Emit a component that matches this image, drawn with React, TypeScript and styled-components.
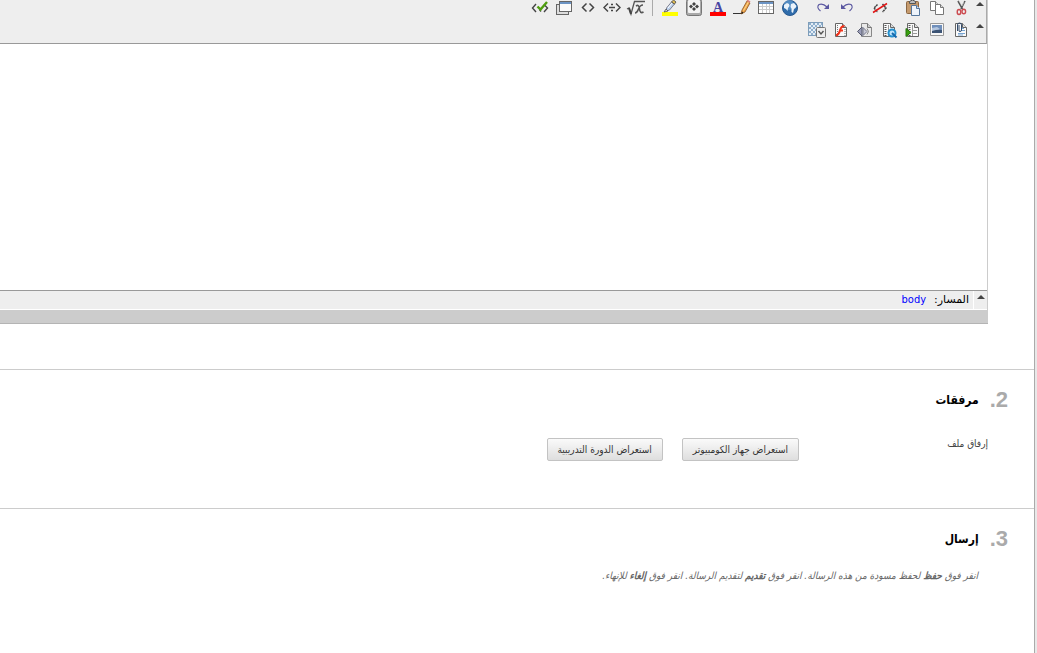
import React from "react";
import styled, { createGlobalStyle, css } from "styled-components";

const GlobalStyle = createGlobalStyle`
  *, *::before, *::after { box-sizing: border-box; }
  body {
    margin: 0;
    background: #e8e8e8;
    color: #000;
    font-family: "DejaVu Sans Condensed", "DejaVu Sans", sans-serif;
    font-size: 10px;
  }
`;

const Page = styled.main`
  min-height: 100vh;
  margin-right: 2px;
  background: #fff;
  border-right: 1px solid #aaa;
`;

const Editor = styled.section`
  margin-right: 46px;
  border-right: 1px solid #ccc;
`;

const Toolbar = styled.div`
  padding-bottom: 5px;
  background: #eee;
  border-right: 1px solid #aaa;
  border-bottom: 1px solid #999;
`;

const ToolRow = styled.div`
  display: flex;
  align-items: flex-start;
  height: 16px;
  & + & { margin-top: 6px; }
`;

const Collapse = styled.button<{ $low?: boolean }>`
  display: flex;
  justify-content: center;
  width: 13px;
  height: 16px;
  padding: ${(p) => (p.$low ? 4 : 2)}px 0 0;
  border: 0;
  background: none;
`;

const Tool = styled.button<{ $gap?: boolean }>`
  display: flex;
  justify-content: center;
  flex: none;
  width: 24px;
  height: 16px;
  padding: 0;
  border: 0;
  background: none;
  ${(p) => p.$gap && css`margin-right: 9px;`}
`;

const Separator = styled.span`
  width: 1px;
  height: 16px;
  margin: 0 5px 0 4px;
  background: #aaa;
`;

const Icon = styled.svg`
  display: block;
  flex: none;
  overflow: visible;
`;

const Content = styled.textarea`
  display: block;
  width: 100%;
  height: 246px;
  padding: 8px;
  border: 0;
  outline: 0;
  resize: none;
  background: #fff;
  font: inherit;
`;

const StatusBar = styled.div`
  display: flex;
  height: 20px;
  background: #eee;
  border-top: 1px solid #999;
  border-bottom: 1px solid #fff;
`;

const PathLine = styled.div`
  display: flex;
  flex: 1;
  gap: 8px;
  align-items: center;
  padding-right: 4px;
  border-right: 1px solid #fff;
  font-family: "DejaVu Sans", sans-serif;
  font-size: 11px;
  line-height: 18px;
`;

const PathLink = styled.a`
  color: #00f;
  font-family: "DejaVu Sans Condensed", "DejaVu Sans", sans-serif;
  text-decoration: none;
`;

const ResizeBar = styled.div`
  height: 14px;
  margin-right: -1px;
  background: #ccc;
  border-bottom: 1px solid #b4b4b4;
`;

const Step = styled.section`
  padding: 16px 26px 0 0;
  border-top: 1px solid #ccc;
`;

const Steps = styled.div`
  margin-top: 45px;
`;

const StepTitle = styled.h2`
  display: flex;
  gap: 11px;
  align-items: center;
  height: 28px;
  margin: 0;
  font-size: 12px;
  font-weight: bold;
`;

const StepNumber = styled.span`
  color: #aaa;
  font-family: "Liberation Sans", sans-serif;
  font-size: 22px;
`;

const Field = styled.div`
  display: flex;
  height: 94px;
  padding: 24px 20px 0 0;
`;

const FieldLabel = styled.label`
  width: 189px;
  color: #444;
  line-height: 12px;
`;

const Actions = styled.div`
  display: flex;
  gap: 19px;
`;

const BrowseButton = styled.button`
  height: 23px;
  padding: 0 10px;
  border: 1px solid #c3c3c3;
  border-radius: 2px;
  background: linear-gradient(#fafafa, #dedede);
  color: #333;
  font: inherit;
  white-space: nowrap;
`;

const Note = styled.p`
  margin: 15px 30px 0 0;
  color: #666;
  font-style: italic;
  line-height: 16px;
`;

const PageSheet = () => (
  <>
    <path d="M2.5 1.5h7l4 4v9h-11z" fill="#fafafa" stroke="#666" />
    <path d="M9.5 1.5v4h4" fill="#ddd" stroke="#666" />
  </>
);

const FilmSheet = () => (
  <>
    <PageSheet />
    <path d="M4.5 3v11" stroke="#555" strokeWidth="2" strokeDasharray="1 1" />
    <path d="M7.5 3v11" stroke="#999" />
    <path d="M8 8.5h4M8 11.5h4" stroke="#999" />
  </>
);

const drawings: Record<string, React.ReactNode> = {
  cut: (
    <g fill="none">
      <path d="M5 1l4.500 8M12 1L8 9" stroke="#555" strokeWidth="1.600" />
      <path d="M6 1l3 5M11 2L9 6" stroke="#ddd" strokeWidth=".6" />
      <ellipse cx="6" cy="12" rx="1.800" ry="2.500" stroke="#cc4b50" strokeWidth="1.400" />
      <ellipse cx="10.800" cy="11.500" rx="1.800" ry="2.300" stroke="#cc4b50" strokeWidth="1.400" />
    </g>
  ),
  copy: (
    <g fill="#fff" stroke="#777">
      <path d="M1.500 1.500h5l3 3v6h-8z" />
      <path d="M6.500 1.500v3h3" fill="#ddd" />
      <path d="M6.500 4.500h5l3 3v7h-8z" />
      <path d="M11.500 4.500v3h3" fill="#ddd" />
    </g>
  ),
  paste: (
    <>
      <rect x="1.500" y="1.500" width="12" height="12" rx="1" fill="#c59a6d" stroke="#8a6642" />
      <path d="M4.500 1.500q3-3 6 0v2h-6z" fill="#bbb" stroke="#555" />
      <path d="M6.500 5.500h5l3 3v7h-8z" fill="#eef4fb" stroke="#56779c" />
      <path d="M11.500 5.500v3h3" fill="#d0deee" stroke="#56779c" />
    </>
  ),
  unlinkCode: (
    <g fill="none">
      <path d="M5.500 4.500L2 8l3.500 4M10.500 4L14 8l-3.500 4" stroke="#444" strokeWidth="1.500" strokeDasharray="2 .5" />
      <path d="M1 12.500L15 3.500" stroke="#e21616" strokeWidth="1.500" />
    </g>
  ),
  undo: (
    <g fill="none" stroke="#5a57a0">
      <path d="M4 7q4-4 8-2.500 3 3-1.500 6.500" strokeWidth="1.100" />
      <path d="M2 4v5h5z" fill="#5a57a0" stroke="none" />
    </g>
  ),
  redo: (
    <g fill="none" stroke="#5a57a0">
      <path d="M12 7Q8 3 4 4.500q-3 3 1.500 6.500" strokeWidth="1.100" />
      <path d="M14 4v5H9z" fill="#5a57a0" stroke="none" />
    </g>
  ),
  globe: (
    <>
      <circle cx="8" cy="8" r="7.500" fill="#2f6cab" stroke="#28598f" />
      <circle cx="7" cy="5" r="5" fill="#6da4d6" opacity=".6" />
      <path d="M2 5l3-2 2 1 .5 2-1.500 2-.5 3-1.500-2L2 8z" fill="#eaf3fb" />
      <path d="M9 4l3-1 2.500 3-1 2-1.500 1-1 4-1.500-1V8.500L8.500 7z" fill="#eaf3fb" />
    </>
  ),
  table: (
    <g shapeRendering="crispEdges">
      <rect x="0" y="1" width="16" height="13" fill="#666" />
      <rect x="1" y="2" width="14" height="2" fill="#6c94c4" />
      <rect x="1" y="4" width="14" height="9" fill="#fff" />
      <path d="M4.500 4v9M8.500 4v9M11.500 4v9M1 6.500h14M1 9.500h14" stroke="#ccc" />
    </g>
  ),
  pencil: (
    <>
      <path d="M-1 13.500h10" stroke="#333" />
      <path d="M8 10l5-9 3 2-5 9-4 2z" fill="#eda44a" stroke="#8d5722" strokeWidth=".8" />
      <path d="M9.500 10.500l5-8.500" stroke="#ffdb92" />
      <path d="M12.500 1l1-1.500 3 2-1 1.500z" fill="#db837b" />
      <path d="M7 14l1-2.500 1.500 1z" fill="#222" />
    </>
  ),
  textColor: (
    <>
      <text x="8" y="12" textAnchor="middle" fontFamily="Liberation Serif, serif" fontSize="14" fontWeight="bold" fill="#4845a2">A</text>
      <rect y="12" width="16" height="4" fill="#f00" />
    </>
  ),
  symbol: (
    <>
      <rect x=".5" y="-.5" width="15" height="16" rx="2" fill="#aaa" stroke="#777" />
      <rect x="2" y="0" width="12" height="13" rx="1" fill="#f4f4f4" />
      <path d="M8 2l2 2-2 2-2-2zM8 7l2 2-2 2-2-2zM5 4.500l2 2-2 2-2-2zM11 4.500l2 2-2 2-2-2z" fill="#444" />
    </>
  ),
  highlight: (
    <>
      <rect y="12" width="16" height="4" fill="#ff0" />
      <path d="M4.500 8l5-6 3 2-5 6-3 1z" fill="#bfd4ee" stroke="#667" strokeWidth=".8" />
      <path d="M6 8l4-5" stroke="#fff" />
      <path d="M9.500 2l2-2 2.500 2-1.500 2z" fill="#e4c052" stroke="#444" strokeWidth=".8" />
      <path d="M4 9l-2 3 4-1z" fill="#ddd" stroke="#555" strokeWidth=".8" />
    </>
  ),
  formula: (
    <>
      <path d="M-1 9l2-1 2 6L6.500 1.500H17" fill="none" stroke="#555" strokeWidth="1.300" />
      <path d="M1 8l2 6" stroke="#444" strokeWidth="2" />
      <path d="M8 6q3-2 3.500 3t4 3M15 5q-3 0-4.500 4T7 13" fill="none" stroke="#555" strokeWidth="1.600" />
    </>
  ),
  codeBreak: (
    <g fill="none" stroke="#444" strokeWidth="1.400">
      <path d="M4 3.500L0 7.500l4 4M12 3.500l4 4-4 4M5 7.500h6" />
      <path d="M7 4.500h2M7 10.500h2" />
    </g>
  ),
  code: <path d="M6.500 3.500l-4 4 4 4M9.500 3.500l4 4-4 4" fill="none" stroke="#444" strokeWidth="1.500" />,
  windows: (
    <g shapeRendering="crispEdges">
      <rect x=".5" y="4.500" width="12" height="10" fill="#ddd" stroke="#666" />
      <rect x="3.500" y="1.500" width="12" height="10" fill="#fafafa" stroke="#666" />
      <rect x="4" y="2" width="11" height="2" fill="#6c94c4" />
    </g>
  ),
  validate: (
    <g fill="none">
      <path d="M4 4L.5 8 4 12M12 4.500L15.500 8 12 12M7.500 9.500l1.500 2" stroke="#444" strokeWidth="1.400" />
      <path d="M5.500 6.500L8.500 9.500l6.500-7.500" stroke="#4f9e0f" strokeWidth="2.400" />
    </g>
  ),
  attach: (
    <>
      <PageSheet />
      <path d="M8 6.500h3M8 8.500h4M5 11.500h7M5 13h5" stroke="#76a4d2" />
      <path d="M4.500 9V3q0-2 2-2t2 2v5q0 1.500-1.500 1.500T6 8V3" fill="none" stroke="#334b6b" />
    </>
  ),
  image: (
    <>
      <path d="M1.500 1.500h13v12h-13z" fill="#f7f7f7" stroke="#999" />
      <path d="M3 3h10v8H3z" fill="#6f8fbb" />
      <path d="M3 6l5-1 3 2-3 2H3z" fill="#b4c6df" />
      <path d="M3 9q6-2 10-1v3H3z" fill="#3c5475" />
    </>
  ),
  video: (
    <>
      <FilmSheet />
      <path d="M1 6.500l5 4-5 4z" fill="#39a00d" stroke="#25750a" />
    </>
  ),
  quicktime: (
    <>
      <FilmSheet />
      <circle cx="11" cy="11" r="3.500" fill="#bfe4fb" stroke="#238fce" strokeWidth="2" />
      <path d="M11 11l4.500 4.500" stroke="#1768ac" strokeWidth="2" />
    </>
  ),
  audio: (
    <>
      <path d="M4.500 1.500h6l4 4v9h-10z" fill="#e9e9e9" stroke="#888" />
      <path d="M10.500 1.500v4h4" fill="#ccc" stroke="#777" />
      <path d="M.5 9.500L5 5v9z" fill="#9a9db8" stroke="#55586c" />
      <path d="M6 5.500l4 4-4 4z" fill="#c6c8d6" stroke="#777a8c" />
      <path d="M10 6.500q3 3 0 6" fill="none" stroke="#888" />
    </>
  ),
  flash: (
    <>
      <PageSheet />
      <path d="M4.500 3v11M12 7v7" stroke="#777" strokeDasharray="1 1" />
      <path d="M11.500 4Q8 4 7 8.500q-1 4-4 5M6 8.500h4" fill="none" stroke="#f0341c" strokeWidth="2" />
    </>
  ),
  mashup: (
    <>
      <rect x="-.5" y=".5" width="14" height="13" fill="#e4edf5" stroke="#7d9dba" />
      <path d="M0 2h13M0 6h13M0 10h13" stroke="#8fafcd" strokeWidth="2" strokeDasharray="2 2" />
      <path d="M2 4h11M2 8h11M2 12h9" stroke="#8fafcd" strokeWidth="2" strokeDasharray="2 2" />
      <rect x="7.500" y="5.500" width="9" height="10" rx="1" fill="#eee" stroke="#777" />
      <path d="M9.500 9l2.500 3L14.500 9" fill="none" stroke="#555" strokeWidth="1.400" />
    </>
  ),
};

type ToolSpec = [name: string, label: string, gap?: boolean];

const firstRow: ToolSpec[] = [
  ["cut", "قص"],
  ["copy", "نسخ"],
  ["paste", "لصق"],
  ["unlinkCode", "إزالة التنسيق", true],
  ["undo", "تراجع", true],
  ["redo", "إعادة"],
  ["globe", "ارتباط", true],
  ["table", "جدول"],
  ["pencil", "تحرير"],
  ["textColor", "لون النص"],
  ["symbol", "رمز"],
  ["highlight", "تمييز"],
];

const codeTools: ToolSpec[] = [
  ["formula", "معادلة"],
  ["codeBreak", "فاصل"],
  ["code", "مصدر"],
  ["windows", "معاينة"],
  ["validate", "تدقيق"],
];

const secondRow: ToolSpec[] = [
  ["attach", "إرفاق"],
  ["image", "صورة"],
  ["video", "فيديو"],
  ["quicktime", "كويك تايم"],
  ["audio", "صوت"],
  ["flash", "فلاش"],
  ["mashup", "تطبيقات"],
];

const Tools = ({ items }: { items: ToolSpec[] }) => (
  <>
    {items.map(([name, label, gap]) => (
      <Tool key={name} type="button" aria-label={label} $gap={gap}>
        <Icon width="16" height="16" viewBox="0 0 16 16" aria-hidden="true">
          {drawings[name]}
        </Icon>
      </Tool>
    ))}
  </>
);

const CollapseArrow = ({ low }: { low?: boolean }) => (
  <Collapse type="button" aria-label="طي" $low={low}>
    <Icon width="8" height="4" viewBox="0 0 8 4" aria-hidden="true">
      <path d="M4 0l4 4H0z" fill="#444" />
    </Icon>
  </Collapse>
);

export default function App() {
  return (
    <>
      <GlobalStyle />
      <Page dir="rtl" lang="ar">
        <Editor>
          <Toolbar>
            <ToolRow>
              <CollapseArrow />
              <Tools items={firstRow} />
              <Separator />
              <Tools items={codeTools} />
            </ToolRow>
            <ToolRow>
              <CollapseArrow />
              <Tools items={secondRow} />
            </ToolRow>
          </Toolbar>
          <Content aria-label="الرسالة" />
          <StatusBar>
            <CollapseArrow low />
            <PathLine>
              <span>المسار:</span>
              <PathLink href="#body">body</PathLink>
            </PathLine>
          </StatusBar>
          <ResizeBar />
        </Editor>

        <Steps>
          <Step>
            <StepTitle>
              <StepNumber>2.</StepNumber>
              مرفقات
            </StepTitle>
            <Field>
              <FieldLabel htmlFor="browse-computer">إرفاق ملف</FieldLabel>
              <Actions>
                <BrowseButton id="browse-computer" type="button">استعراض جهاز الكومبيوتر</BrowseButton>
                <BrowseButton type="button">استعراض الدورة التدريبية</BrowseButton>
              </Actions>
            </Field>
          </Step>
          <Step>
            <StepTitle>
              <StepNumber>3.</StepNumber>
              إرسال
            </StepTitle>
            <Note>
              انقر فوق <b>حفظ</b> لحفظ مسودة من هذه الرسالة. انقر فوق <b>تقديم</b> لتقديم الرسالة. انقر فوق <b>إلغاء</b> للإنهاء.
            </Note>
          </Step>
        </Steps>
      </Page>
    </>
  );
}
